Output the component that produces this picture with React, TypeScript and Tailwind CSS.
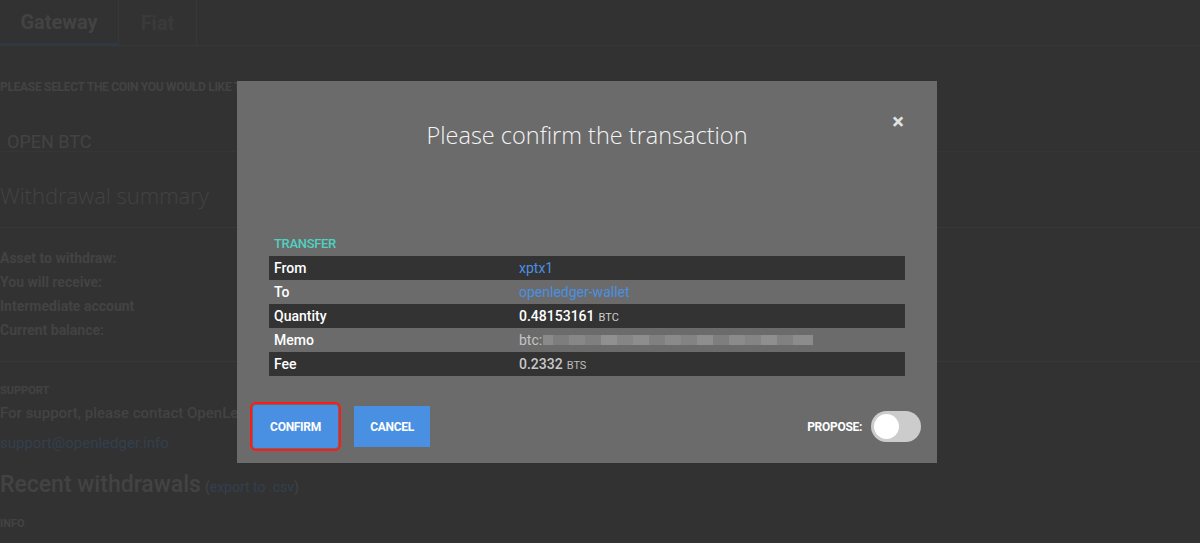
export default function App() {
  const rows = [
    { label: "From", dark: true, value: <span className="text-[#4a90e2]">xptx1</span> },
    { label: "To", dark: false, value: <span className="text-[#4a90e2]">openledger-wallet</span> },
    {
      label: "Quantity",
      dark: true,
      value: (
        <span>
          <span className="font-medium text-white">0.48153161</span>
          <span className="ml-1 text-[11px] text-[#cfcfcf]">BTC</span>
        </span>
      ),
    },
    {
      label: "Memo",
      dark: false,
      value: (
        <span className="flex items-center">
          <span className="text-[#c4c4c4]">btc:</span>
          <span className="ml-[1px] flex h-[10px] items-stretch">
            <span className="w-[10px] bg-[#8a8a8a]"></span>
            <span className="w-[16px] bg-[#7d7d7d]"></span>
            <span className="w-[16px] bg-[#878787]"></span>
            <span className="w-[16px] bg-[#7f7f7f]"></span>
            <span className="w-[16px] bg-[#909090]"></span>
            <span className="w-[16px] bg-[#858585]"></span>
            <span className="w-[16px] bg-[#8d8d8d]"></span>
            <span className="w-[16px] bg-[#808080]"></span>
            <span className="w-[16px] bg-[#8a8a8a]"></span>
            <span className="w-[16px] bg-[#838383]"></span>
            <span className="w-[16px] bg-[#8e8e8e]"></span>
            <span className="w-[16px] bg-[#7e7e7e]"></span>
            <span className="w-[16px] bg-[#8b8b8b]"></span>
            <span className="w-[16px] bg-[#848484]"></span>
            <span className="w-[16px] bg-[#8f8f8f]"></span>
            <span className="w-[16px] bg-[#818181]"></span>
            <span className="w-[20px] bg-[#8c8c8c]"></span>
          </span>
        </span>
      ),
    },
    {
      label: "Fee",
      dark: true,
      value: (
        <span>
          <span className="font-medium text-[#c8c8c8]">0.2332</span>
          <span className="ml-1 text-[11px] text-[#bdbdbd]">BTS</span>
        </span>
      ),
    },
  ];

  return (
    <div className="relative h-[543px] w-[1200px] overflow-hidden bg-[#323232] font-['Roboto',sans-serif] text-[#434343]">

      {/* BACKGROUND PAGE */}
      <div className="flex h-[46px] border-b border-[#383838]">
        <div className="flex w-[119px] items-center justify-center border-r border-b-2 border-r-[#383838] border-b-[#2c3a48] text-[20px] font-bold">
          Gateway
        </div>
        <div className="flex w-[78px] items-center justify-center border-r border-[#383838] text-[20px] font-bold text-[#3a3a3a]">
          Fiat
        </div>
      </div>

      <div className="pt-[32px] text-[12px] font-bold tracking-tight uppercase">
        Please select the coin you would like to
      </div>

      <div className="mt-[29px] h-[27px] overflow-hidden border-b border-[#363636] pl-[7px] text-[18px] leading-[34px]">
        OPEN BTC
      </div>

      <div className="mt-[30px] h-[46px] border-b border-[#383838] font-['Open_Sans',sans-serif] text-[22px] font-light leading-[26px]">
        Withdrawal summary
      </div>

      <div className="flex flex-col pt-[18px] text-[14px] font-bold leading-[24px]">
        <span>Asset to withdraw:</span>
        <span>You will receive:</span>
        <span>Intermediate account</span>
        <span>Current balance:</span>
      </div>

      <div className="mt-[19px] border-t border-[#383838] pt-[21px] text-[11px] font-bold uppercase">Support</div>
      <div className="mt-[2px] text-[15px] font-medium">For support, please contact OpenLedger</div>
      <div className="mt-[8px] text-[15px] text-[#32404e]">support@openledger.info</div>
      <div className="mt-[13px] flex items-baseline">
        <span className="text-[23px] font-medium">Recent withdrawals</span>
        <span className="ml-[4px] text-[14px]">(<span className="text-[#32404e]">export to .csv</span>)</span>
      </div>
      <div className="mt-[14px] text-[11px] font-bold">INFO</div>

      {/* MODAL */}
      <div className="absolute left-[237px] top-[81px] flex h-[382px] w-[700px] flex-col bg-[#6b6b6b] px-[32px]">
        <button className="absolute right-[33px] top-[30px] text-[22px] font-bold leading-none text-[#e2e2e2]">×</button>

        <div className="h-[155px] pt-[38px] text-center font-['Open_Sans',sans-serif] text-[23.5px] font-light leading-[32px] text-[#f4f4f4]">
          Please confirm the transaction
        </div>

        <div className="h-[20px] pl-[5px] text-[13px] font-medium leading-[16px] tracking-tight text-[#4fd1c1]">
          TRANSFER
        </div>

        <div className="flex flex-col text-[14px]">
          {rows.map((r) => (
            <div
              key={r.label}
              className={`grid h-[24px] grid-cols-[245px_1fr] items-center pl-[5px] ${r.dark ? "bg-[#333333]" : ""}`}
            >
              <span className="font-medium text-white">{r.label}</span>
              <span>{r.value}</span>
            </div>
          ))}
        </div>

        <div className="-ml-[19px] mt-[26px] flex items-center">
          <div className="rounded-[6px] border-[2px] border-[#ff1a1a] p-[1px]">
            <button className="h-[43px] w-[85px] rounded-[3px] bg-[#4a90e2] text-[12px] font-bold tracking-tight text-white">
              CONFIRM
            </button>
          </div>
          <button className="ml-[13px] h-[41px] w-[76px] bg-[#4a90e2] text-[12px] font-bold tracking-tight text-white">
            CANCEL
          </button>

          <div className="-mr-[16px] ml-auto flex items-center">
            <span className="text-[12px] font-bold tracking-tight text-white">PROPOSE:</span>
            <div className="ml-[9px] flex h-[31px] w-[50px] items-center rounded-full bg-[#cccccc] pl-[3px]">
              <div className="h-[25px] w-[25px] rounded-full bg-white"></div>
            </div>
          </div>
        </div>
      </div>
    </div>
  );
}
